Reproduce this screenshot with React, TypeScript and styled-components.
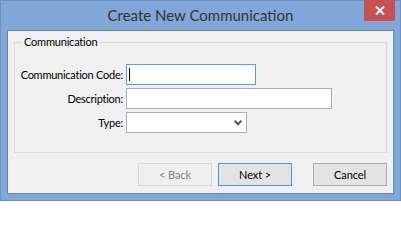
import React from 'react';
import styled, { createGlobalStyle } from 'styled-components';

const GlobalStyle = createGlobalStyle`
  html, body {
    margin: 0;
    padding: 0;
    background: #ffffff;
  }
  * {
    box-sizing: border-box;
  }
`;

const uiFont = `Lato, "Open Sans", "Liberation Sans", sans-serif`;

const Window = styled.div`
  width: 401px;
  height: 201px;
  display: flex;
  flex-direction: column;
  background: #80a7d8;
  border: 1px solid #6a8fc0;
  font-family: ${uiFont};
`;

const TitleBar = styled.div`
  height: 29px;
  flex: none;
  position: relative;
  display: flex;
  align-items: center;
  justify-content: center;
`;

const Title = styled.span`
  font-size: 15px;
  color: #333333;
  margin-top: -1px;
`;

const CloseButton = styled.div`
  position: absolute;
  top: -1px;
  right: 5px;
  width: 31px;
  height: 21px;
  background: #c75050;
  display: flex;
  align-items: center;
  justify-content: center;
`;

const Client = styled.div`
  height: 164px;
  flex: none;
  margin: 0 6px;
  background: #f0f0f0;
  border: 1px solid #6285b3;
  display: flex;
  flex-direction: column;
  padding: 0 6px;
`;

const GroupBox = styled.fieldset`
  margin: 3px 0 0 0;
  padding: 0;
  height: 119px;
  border: 1px solid #dcdcdc;
`;

const Legend = styled.legend`
  margin-left: 7px;
  padding: 0 2px;
  font-size: 11px;
  letter-spacing: -0.2px;
  color: #000000;
  line-height: 16px;
`;

const Form = styled.div`
  display: grid;
  grid-template-columns: 108px auto;
  column-gap: 3px;
  row-gap: 3px;
  padding-top: 14px;
  align-items: center;
`;

const Label = styled.label`
  font-size: 11px;
  letter-spacing: -0.25px;
  color: #000000;
  text-align: right;
  white-space: nowrap;
`;

const Field = styled.div<{ $width: number; $focused?: boolean }>`
  position: relative;
  width: ${(p) => p.$width}px;
  height: 21px;
  background: #ffffff;
  border: 1px solid ${(p) => (p.$focused ? '#569de5' : '#abadb3')};
  display: flex;
  align-items: center;
`;

const Caret = styled.span`
  width: 1px;
  height: 13px;
  margin-left: 2px;
  background: #000000;
`;

const Chevron = styled.svg`
  position: absolute;
  right: 4px;
  top: 7px;
`;

const ButtonRow = styled.div`
  display: flex;
  justify-content: flex-end;
  padding-top: 10px;
`;

const Button = styled.div<{ $state?: 'disabled' | 'default' }>`
  width: 74px;
  height: 23px;
  display: flex;
  align-items: center;
  justify-content: center;
  font-size: 11px;
  letter-spacing: -0.1px;
  margin-left: ${(p) => (p.$state === 'default' ? '6px' : '21px')};
  color: ${(p) => (p.$state === 'disabled' ? '#838383' : '#000000')};
  border: 1px solid
    ${(p) =>
      p.$state === 'disabled' ? '#d9d9d9' : p.$state === 'default' ? '#3c9cf0' : '#adadad'};
  background: ${(p) => (p.$state === 'disabled' ? '#efefef' : '#e3e3e3')};

  &:first-child {
    margin-left: 0;
  }
`;

export default function App() {
  return (
    <>
      <GlobalStyle />
      <Window>
        <TitleBar>
          <Title>Create New Communication</Title>
          <CloseButton>
            <svg width="10" height="9" viewBox="0 0 10 9">
              <path d="M1 0.5 L9 8.5 M9 0.5 L1 8.5" stroke="#ffffff" strokeWidth="2" />
            </svg>
          </CloseButton>
        </TitleBar>
        <Client>
          <GroupBox>
            <Legend>Communication</Legend>
            <Form>
              <Label>Communication Code:</Label>
              <Field $width={130} $focused>
                <Caret />
              </Field>
              <Label>Description:</Label>
              <Field $width={206} />
              <Label>Type:</Label>
              <Field $width={121}>
                <Chevron width="8" height="6" viewBox="0 0 8 6">
                  <path d="M0.7 0.7 L4 4.3 L7.3 0.7" fill="none" stroke="#555555" strokeWidth="2" />
                </Chevron>
              </Field>
            </Form>
          </GroupBox>
          <ButtonRow>
            <Button $state="disabled">&lt; Back</Button>
            <Button $state="default">Next &gt;</Button>
            <Button>Cancel</Button>
          </ButtonRow>
        </Client>
      </Window>
    </>
  );
}
